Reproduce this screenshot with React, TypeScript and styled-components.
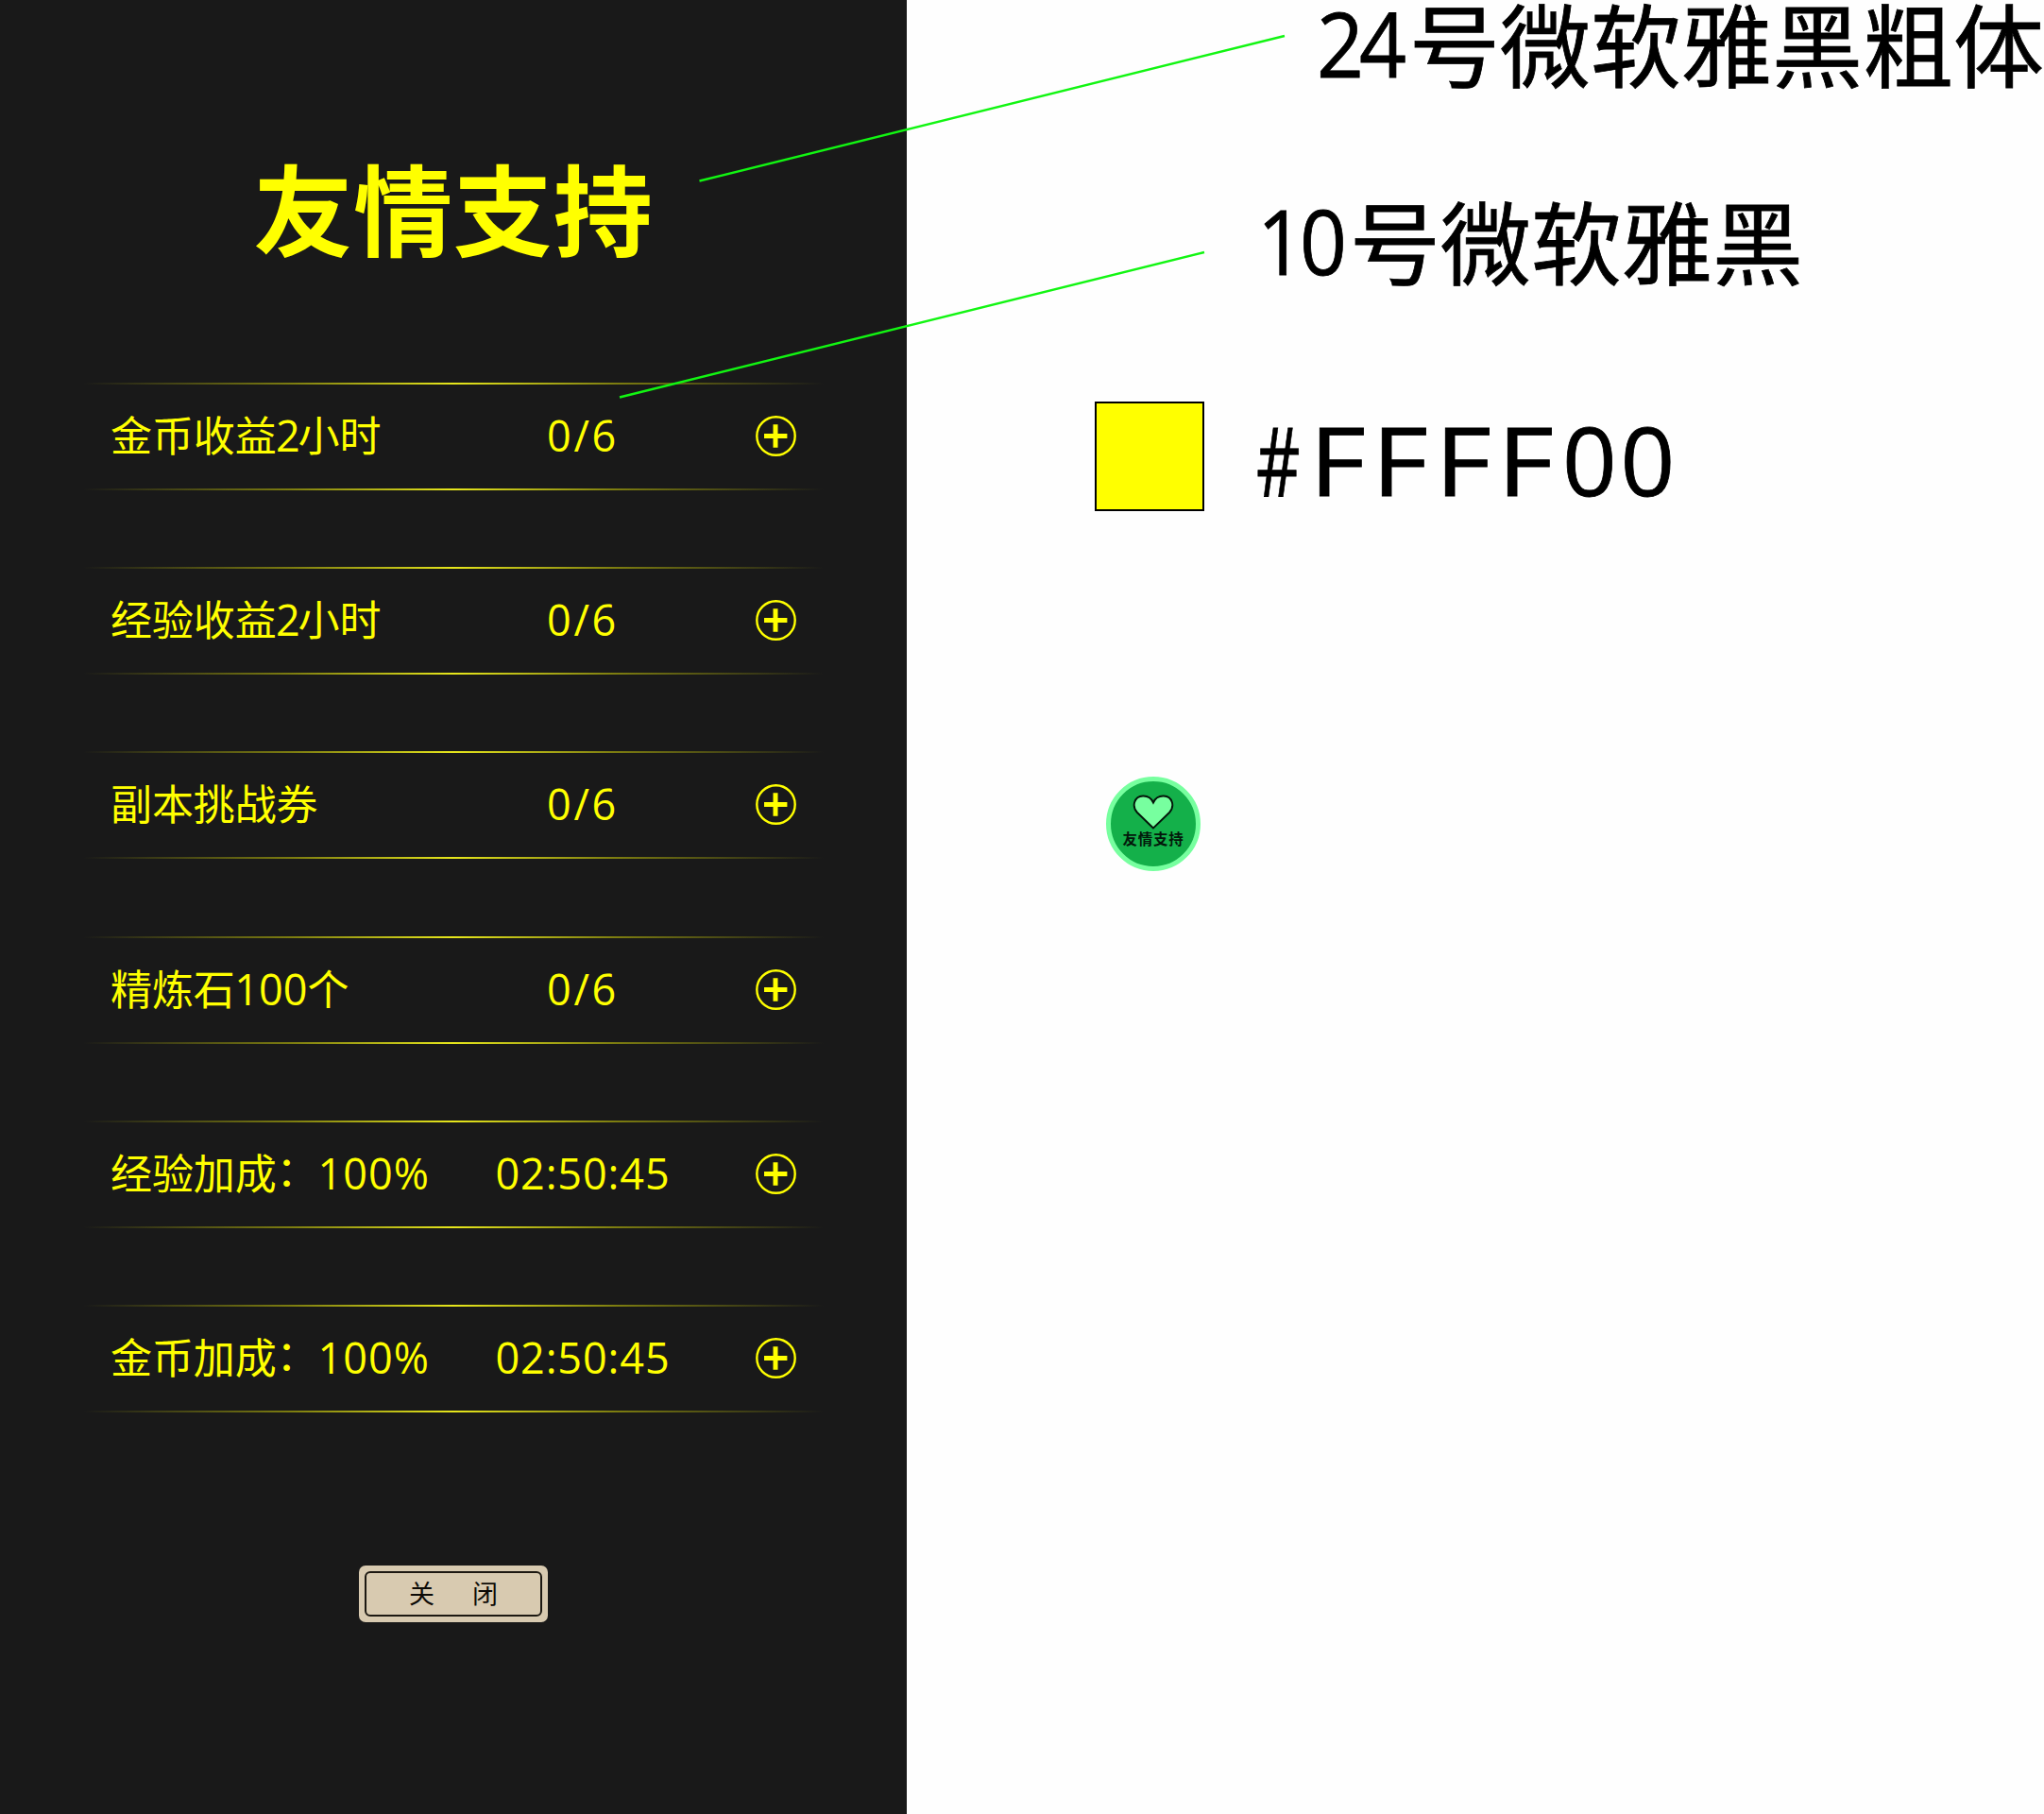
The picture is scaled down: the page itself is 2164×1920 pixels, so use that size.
import React from 'react';
import styled, { createGlobalStyle } from 'styled-components';

const YELLOW = '#ffff00';
const LATIN = "'Open Sans', 'Noto Sans', 'Noto Sans CJK SC', sans-serif";
const HAN = "'Noto Sans CJK SC', 'Noto Sans', sans-serif";

const GlobalStyle = createGlobalStyle`
  body { margin: 0; background: #fefefe; }
`;

const Board = styled.main`
  position: relative;
  display: flex;
  width: 2164px;
  height: 1920px;
  overflow: hidden;
  background: #fefefe;
`;

const Panel = styled.section`
  flex: none;
  box-sizing: border-box;
  display: flex;
  flex-direction: column;
  align-items: center;
  width: 960px;
  height: 1920px;
  padding-top: 157px;
  background: #191919;
  color: ${YELLOW};
`;

const Title = styled.h1`
  margin: 0;
  font: 700 105px/120px ${HAN};
  letter-spacing: 0.7px;
  white-space: nowrap;
`;

const List = styled.ul`
  display: flex;
  flex-direction: column;
  gap: 81.2px;
  width: 784px;
  margin: 128px 0 0;
  padding: 0;
  list-style: none;
`;

const Row = styled.li`
  box-sizing: border-box;
  display: grid;
  grid-template-columns: 349px 300px 1fr;
  align-items: center;
  height: 114px;
  padding-left: 29px;
  background:
    linear-gradient(90deg, transparent, #7c7c10 28%, #e6e61c 50%, #7c7c10 72%, transparent) top / 100% 2px no-repeat,
    linear-gradient(90deg, transparent, #7c7c10 28%, #e6e61c 50%, #7c7c10 72%, transparent) bottom / 100% 2px no-repeat;
`;

const Label = styled.div`
  display: flex;
  height: 110px;
  white-space: nowrap;
`;

const Han = styled.span`
  font: 400 44px/110px ${HAN};
  letter-spacing: -0.1px;
  margin-top: -3px;
`;

const Colon = styled(Han)`
  margin-top: -6px;
`;

const Digits = styled.span<{ $spacing: number; $width?: number; $shift?: number }>`
  font: 400 45px/110px ${LATIN};
  letter-spacing: ${(p) => p.$spacing}px;
  width: ${(p) => (p.$width ? `${p.$width}px` : 'auto')};
  margin-left: ${(p) => p.$shift ?? 0}px;
  margin-top: -1px;
`;

const Value = styled.div`
  display: flex;
  justify-content: center;
  height: 110px;
  margin-left: 2px;
  white-space: nowrap;
`;

const AddButton = styled.button`
  display: flex;
  width: 43px;
  height: 43px;
  margin-left: 34px;
  margin-bottom: 1px;
  padding: 0;
  border: 0;
  background: none;
  color: inherit;
`;

const CloseButton = styled.button`
  box-sizing: border-box;
  width: 200px;
  height: 60px;
  margin-top: 162px;
  padding: 6px;
  border: 0;
  border-radius: 7px;
  background: #d8cab0;
`;

const CloseFrame = styled.span`
  box-sizing: border-box;
  display: flex;
  justify-content: center;
  gap: 40px;
  height: 48px;
  border: 2px solid #1c1811;
  border-radius: 6px;
  font: 400 27px/41px ${HAN};
  color: #0c0a06;
`;

const Notes = styled.section`
  flex: none;
  display: flex;
  flex-direction: column;
  width: 1204px;
  color: #000;
  -webkit-text-stroke: 0.8px #000;
`;

const Note = styled.div<{ $indent: number; $top: number }>`
  display: flex;
  height: 88px;
  margin-top: ${(p) => p.$top}px;
  padding-left: ${(p) => p.$indent}px;
  white-space: nowrap;
`;

const NoteSize = styled.span`
  flex: none;
  width: 98px;
  margin-top: 1px;
  font: 400 95px/88px ${LATIN};
  letter-spacing: -5.5px;
  transform: scaleX(0.92);
  transform-origin: left;
`;

const NoteName = styled.span`
  font: 400 96px/88px ${HAN};
`;

const ColorNote = styled.div`
  display: flex;
  height: 116px;
  margin-top: 128px;
  padding-left: 199px;
`;

const Swatch = styled.div`
  box-sizing: border-box;
  width: 116px;
  height: 116px;
  margin-right: 55px;
  border: 2px solid #000;
  background: ${YELLOW};
`;

const HexChar = styled.span<{ $width: number; $stretch: number }>`
  flex: none;
  width: ${(p) => p.$width}px;
  margin-top: 3px;
  font: 400 101px/116px ${LATIN};
  white-space: nowrap;
  transform: scaleX(${(p) => p.$stretch});
  transform-origin: left;
`;

const Badge = styled.div`
  box-sizing: border-box;
  display: flex;
  flex-direction: column;
  align-items: center;
  width: 100px;
  height: 100px;
  margin: 281px 0 0 211px;
  padding-top: 14px;
  border: 5px solid #77ff9f;
  border-radius: 50%;
  background: #14b04a;
  -webkit-text-stroke: 0;
`;

const BadgeText = styled.span`
  margin-top: -2px;
  font: 700 15.5px/22px ${HAN};
  letter-spacing: 0.7px;
  color: #03180a;
  white-space: nowrap;
`;

const Leaders = styled.svg`
  position: absolute;
  inset: 0;
  pointer-events: none;
`;

const HEX = [
  { char: '#', width: 55.6, stretch: 0.715 },
  { char: 'F', width: 66.5, stretch: 1.15 },
  { char: 'F', width: 66.5, stretch: 1.15 },
  { char: 'F', width: 66.5, stretch: 1.15 },
  { char: 'F', width: 68.9, stretch: 1.15 },
  { char: '0', width: 61.5, stretch: 1 },
  { char: '0', width: 61.5, stretch: 1 },
];

const twoHours = (name: string) => (
  <>
    <Han>{name}</Han>
    <Digits $spacing={0} $width={23.5} $shift={-0.5}>2</Digits>
    <Han>小时</Han>
  </>
);

const bonus = (name: string) => (
  <>
    <Han>{name}</Han>
    <Colon>：</Colon>
    <Digits $spacing={1} $shift={0}>100%</Digits>
  </>
);

const ROWS = [
  { label: twoHours('金币收益'), value: '0/6', spacing: 2.6 },
  { label: twoHours('经验收益'), value: '0/6', spacing: 2.6 },
  { label: <Han>副本挑战券</Han>, value: '0/6', spacing: 2.6 },
  {
    label: (
      <>
        <Han>精炼石</Han>
        <Digits $spacing={0} $shift={-0.5}>100</Digits>
        <Han>个</Han>
      </>
    ),
    value: '0/6',
    spacing: 2.6,
  },
  { label: bonus('经验加成'), value: '02:50:45', spacing: 0.9 },
  { label: bonus('金币加成'), value: '02:50:45', spacing: 0.9 },
];

const PlusIcon = () => (
  <svg width="43" height="43" viewBox="0 0 43 43" fill="none" stroke="currentColor">
    <circle cx="21.5" cy="21.5" r="20.2" strokeWidth="2.4" />
    <path d="M9 21.5H33.4M21 9.3V33.7" strokeWidth="5" />
  </svg>
);

const HeartIcon = () => (
  <svg width="44" height="37" viewBox="0 0 44 37">
    <path
      d="M22 35.5L5 19C-1 12.500 1.500 2 11 1.500C16 1.300 20 4 22 8.500C24 4 28 1.300 33 1.500C42.500 2 45 12.500 39 19Z"
      fill="#77ff9f"
      stroke="#04140a"
      strokeWidth="1.900"
    />
  </svg>
);

export default function App() {
  return (
    <Board>
      <GlobalStyle />
      <Panel>
        <Title>友情支持</Title>
        <List>
          {ROWS.map((row, i) => (
            <Row key={i}>
              <Label>{row.label}</Label>
              <Value>
                <Digits $spacing={row.spacing}>{row.value}</Digits>
              </Value>
              <AddButton>
                <PlusIcon />
              </AddButton>
            </Row>
          ))}
        </List>
        <CloseButton>
          <CloseFrame>
            <span>关</span>
            <span>闭</span>
          </CloseFrame>
        </CloseButton>
      </Panel>
      <Notes>
        <Note $indent={434} $top={0}>
          <NoteSize>24</NoteSize>
          <NoteName>号微软雅黑粗体</NoteName>
        </Note>
        <Note $indent={371} $top={121}>
          <NoteSize>10</NoteSize>
          <NoteName>号微软雅黑</NoteName>
        </Note>
        <ColorNote>
          <Swatch />
          {HEX.map((c, i) => (
            <HexChar key={i} $width={c.width} $stretch={c.stretch}>
              {c.char}
            </HexChar>
          ))}
        </ColorNote>
        <Badge>
          <HeartIcon />
          <BadgeText>友情支持</BadgeText>
        </Badge>
      </Notes>
      <Leaders width="2164" height="1920" stroke="#12f512" strokeWidth="2.4">
        <line x1="740.500" y1="191.500" x2="1360" y2="38" />
        <line x1="656" y1="420.500" x2="1275" y2="267" />
      </Leaders>
    </Board>
  );
}
